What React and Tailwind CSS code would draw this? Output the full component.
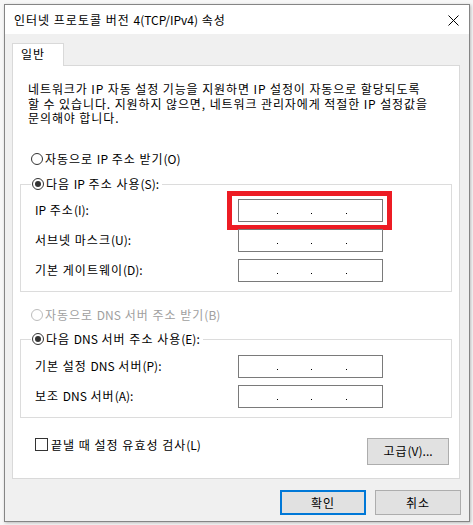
import React from "react";

const FONT = { fontFamily: '"Noto Sans CJK KR", "Malgun Gothic", sans-serif' };

// Malgun Gothic's Hangul is wider than Noto's: widen Hangul runs only.
function K({ children }) {
  const parts = String(children).split(/([\uAC00-\uD7A3]+)/);
  return (
    <>
      {parts.map((p, i) =>
        /[\uAC00-\uD7A3]/.test(p) ? (
          <span key={i} className="tracking-[1px]">
            {p}
          </span>
        ) : (
          <span key={i}>{p}</span>
        )
      )}
    </>
  );
}

function Radio({ checked, disabled, label }) {
  return (
    <div className="flex items-center h-[16px]">
      <span
        className={`w-[12px] h-[12px] rounded-full border bg-white flex items-center justify-center ${
          disabled ? "border-[#bcbcbc]" : "border-[#333333]"
        }`}
      >
        {checked && <span className="w-[6px] h-[6px] rounded-full bg-[#333333]" />}
      </span>
      <span className={`ml-[2px] ${disabled ? "text-[#a0a0a0]" : "text-black"}`}>
        <K>{label}</K>
      </span>
    </div>
  );
}

function IpInput({ highlight }) {
  return (
    <div className="relative w-[145px] h-[23px] border border-[#7a7a7a] bg-white">
      <span className="absolute left-[38px] top-[13px] w-[1px] h-[1px] bg-black" />
      <span className="absolute left-[72px] top-[13px] w-[1px] h-[1px] bg-black" />
      <span className="absolute left-[107px] top-[13px] w-[1px] h-[1px] bg-black" />
      {highlight && (
        <div className="absolute -left-[12px] -top-[9px] w-[165px] h-[39px] border-[5px] border-[#ed1c24]" />
      )}
    </div>
  );
}

function Row({ label, highlight }) {
  return (
    <div className="flex items-center h-[23px]">
      <span className="w-[203px] text-black">
        <K>{label}</K>
      </span>
      <IpInput highlight={highlight} />
    </div>
  );
}

export default function App() {
  return (
    <div
      className="w-[473px] h-[525px] bg-[#f7f7f7] pt-[4px] pl-[4px] text-[12px] leading-[16px] text-black [word-spacing:1px]"
      style={FONT}
    >
      <div className="w-[466px] h-[518px] border border-[#858585] bg-[#f0f0f0] flex flex-col shadow-[1px_1px_3px_rgba(0,0,0,0.25)]">
        {/* Title bar */}
        <div className="h-[29px] bg-white flex items-center justify-between pl-[9px] pr-[10px]">
          <span className="text-[12px] mt-[1px]">
            <K>인터넷 프로토콜 버전 4(TCP/IPv4) 속성</K>
          </span>
          <svg width="11" height="11" viewBox="0 0 11 11" className="mt-[1px]">
            <path d="M0.5 0.5 L10.5 10.5 M10.5 0.5 L0.5 10.5" stroke="#000" strokeWidth="1" fill="none" />
          </svg>
        </div>

        {/* Body */}
        <div className="flex-1 flex flex-col pt-[9px] pl-[7px] pr-[9px]">
          {/* Tab */}
          <div className="relative z-10 w-[52px] h-[23px] border border-b-0 border-[#d9d9d9] bg-white pl-[8px] pt-[2px] mb-[-1px]">
            <K>일반</K>
          </div>
          {/* Panel */}
          <div className="h-[414px] border border-[#d9d9d9] bg-white flex flex-col">
            <p className="ml-[15px] mt-[16px] leading-[14.5px] whitespace-nowrap tracking-[0.9px] [word-spacing:0px]">
              네트워크가 IP 자동 설정 기능을 지원하면 IP 설정이 자동으로 할당되도록
              <br />
              할 수 있습니다. 지원하지 않으면, 네트워크 관리자에게 적절한 IP 설정값을
              <br />
              문의해야 합니다.
            </p>

            <div className="ml-[18px] mt-[25px]">
              <Radio label="자동으로 IP 주소 받기(O)" />
            </div>

            <div className="relative ml-[7px] mt-[17px] w-[432px] h-[108px] border border-[#dcdcdc] pt-[14px] pl-[14px] flex flex-col gap-[7px]">
              <div className="absolute left-[10px] -top-[9px] bg-white pl-[1px] pr-[3px]">
                <Radio checked label="다음 IP 주소 사용(S):" />
              </div>
              <Row label="IP 주소(I):" highlight />
              <Row label="서브넷 마스크(U):" />
              <Row label="기본 게이트웨이(D):" />
            </div>

            <div className="ml-[18px] mt-[15px]">
              <Radio disabled label="자동으로 DNS 서버 주소 받기(B)" />
            </div>

            <div className="relative ml-[7px] mt-[16px] w-[432px] h-[79px] border border-[#dcdcdc] pt-[15px] pl-[14px] flex flex-col gap-[7px]">
              <div className="absolute left-[10px] -top-[9px] bg-white pl-[1px] pr-[3px]">
                <Radio checked label="다음 DNS 서버 주소 사용(E):" />
              </div>
              <Row label="기본 설정 DNS 서버(P):" />
              <Row label="보조 DNS 서버(A):" />
            </div>

            <div className="mt-[20px] ml-[22px] mr-[10px] flex items-start justify-between">
              <div className="flex items-center h-[14px]">
                <span className="w-[13px] h-[13px] border border-[#333333] bg-white" />
                <span className="ml-[3px]">
                  <K>끝낼 때 설정 유효성 검사(L)</K>
                </span>
              </div>
              <button className="w-[82px] h-[27px] border border-[#adadad] bg-[#e1e1e1] flex items-center justify-center">
                <K>고급(V)...</K>
              </button>
            </div>
          </div>

          {/* Bottom buttons */}
          <div className="mt-[11px] mr-[-1px] flex justify-end gap-[9px]">
            <button className="w-[86px] h-[25px] border-2 border-[#0078d7] bg-[#e1e1e1] flex items-center justify-center">
              <K>확인</K>
            </button>
            <button className="w-[86px] h-[25px] border border-[#adadad] bg-[#e1e1e1] flex items-center justify-center">
              <K>취소</K>
            </button>
          </div>
        </div>
      </div>
    </div>
  );
}
